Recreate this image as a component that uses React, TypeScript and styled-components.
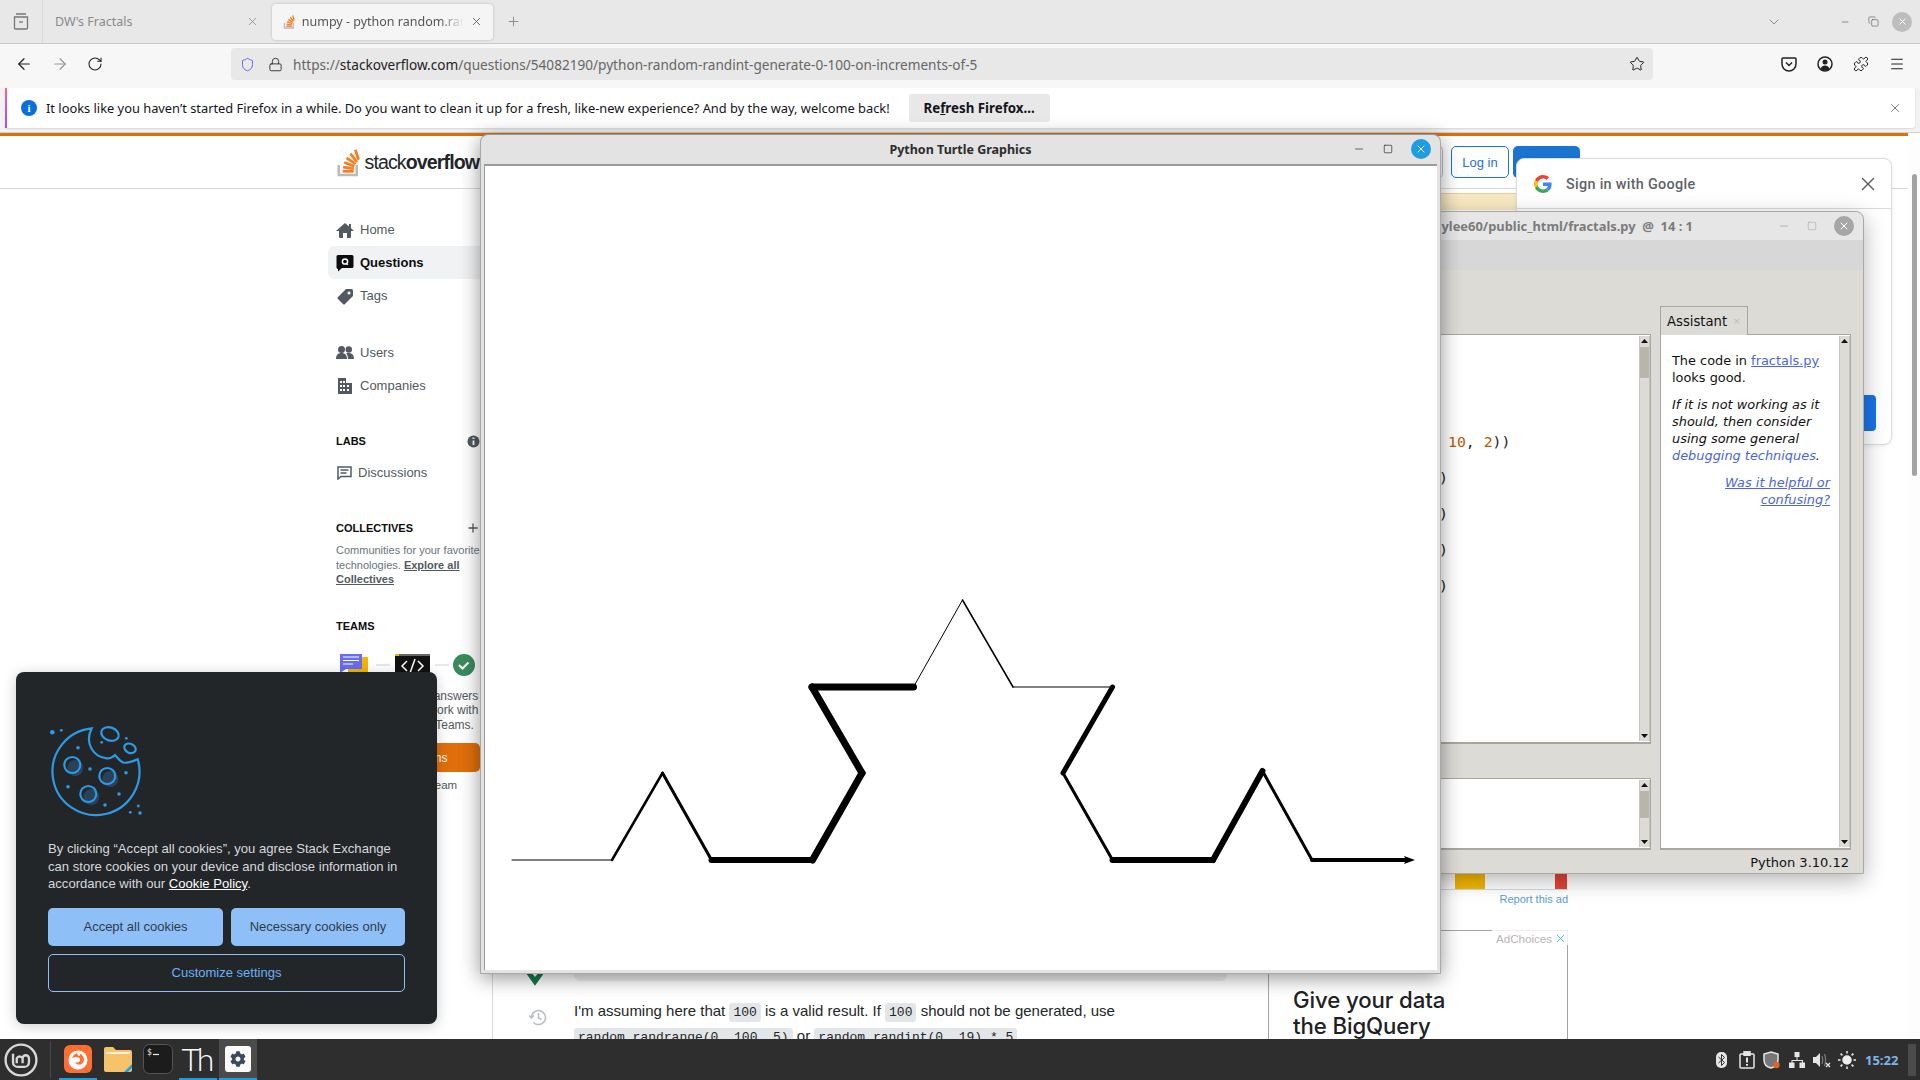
import React from "react";
import styled, { createGlobalStyle } from "styled-components";
import { ArrowLeft, ArrowRight, RotateCw, Lock, Star, Shield, Plus, X, ChevronDown, Menu, Puzzle, Minus, Square, Copy } from "lucide-react";
import { FaCog } from "react-icons/fa";

const Global = createGlobalStyle`
  html, body { margin: 0; padding: 0; overflow: hidden; background: #fff; }
  * { box-sizing: border-box; }
`;

const Desktop = styled.div`
  position: relative; width: 1920px; height: 1080px; overflow: hidden;
  display: flex; flex-direction: column; font-family: "Liberation Sans", Arial, sans-serif;
`;

/* ---------- Firefox chrome ---------- */
const TabBar = styled.div`
  height: 44px; flex: none; display: flex; align-items: center; background: #e8e8e8;
  border-bottom: 1px solid #c9c9c9; font-family: "Noto Sans", sans-serif; font-size: 12.5px; color: #555;
`;
const SideToggle = styled.div`
  width: 43px; height: 43px; display: flex; align-items: center; justify-content: center;
  border-right: 1px solid #dadada; color: #777;
`;
const InactiveTab = styled.div`
  width: 222px; padding: 0 6px 0 12px; display: flex; align-items: center; justify-content: space-between; color: #8a8a8a; margin-right: 7px;
`;
const ActiveTab = styled.div`
  width: 221px; height: 36px; padding: 0 10px 0 11px; display: flex; align-items: center; gap: 6px;
  background: #f5f5f5; border-radius: 4px; box-shadow: 0 0 3px rgba(0,0,0,.2); color: #555;
`;
const TabLabel = styled.span`
  flex: 1; overflow: hidden; white-space: nowrap;
  -webkit-mask-image: linear-gradient(90deg, #000 85%, transparent);
  mask-image: linear-gradient(90deg, #000 85%, transparent);
`;
const NewTab = styled.div`
  margin-left: 13px; color: #888; display: flex;
`;
const TabSpacer = styled.div`flex: 1;`;
const WinButtons = styled.div`
  display: flex; align-items: center; gap: 13px; padding-right: 8px; color: #555;
`;
const WinMin = styled(Minus)`margin-right: 5px;`;
const Chevron = styled.div`margin-right: 58px; display: flex; color: #777;`;
const RoundClose = styled.div<{ $bg: string }>`
  width: 20px; height: 20px; border-radius: 50%; background: ${p => p.$bg}; color: #fff;
  display: flex; align-items: center; justify-content: center;
`;
const Toolbar = styled.div`
  height: 44px; flex: none; display: flex; align-items: center; background: #f7f7f7;
  padding: 0 15px 4px 15px; color: #222;
`;
const NavIcon = styled.div<{ $dim?: boolean }>`
  width: 36px; display: flex; color: ${p => (p.$dim ? "#999" : "#222")};
`;
const UrlBar = styled.div`
  margin-left: 108px; width: 1422px; height: 32px; background: #e8e8e8; border-radius: 4px;
  display: flex; align-items: center; padding: 0 8px 0 9px; color: #666;
  font-family: "Noto Sans", sans-serif; font-size: 13.6px;
`;
const LockIcon = styled(Lock)`margin-left: 13px;`;
const UrlHost = styled.span`color: #222;`;
const UrlText = styled.span`flex: 1; margin-left: 10px; white-space: nowrap;`;
const ToolIcons = styled.div`
  margin-left: auto; display: flex; gap: 20px; align-items: center; color: #222;
`;
const NoticeStrip = styled.div`
  height: 44px; flex: none; background: #f2f2f2; padding: 0 5px 4px 5px; 
`;
const NoticeBar = styled.div`
  height: 40px; background: #fff; display: flex; align-items: center; padding-left: 14px; border-radius: 3px;
  border-left: 2px solid; border-image: linear-gradient(#ff5f8f, #a34bff) 1; box-shadow: 0 1px 2px rgba(0,0,0,.12);
  font-family: "Noto Sans", sans-serif; font-size: 12.85px; color: #15141a; white-space: nowrap;
`;
const InfoDot = styled.div`
  width: 16px; height: 16px; border-radius: 50%; background: #0b6ee0; color: #fff; font: bold 11px "Liberation Serif", serif;
  display: flex; align-items: center; justify-content: center; margin-right: 9px; flex: none;
`;
const RefreshBtn = styled.div`
  margin-left: 19px; width: 141px; height: 28px; background: #e8e8e8; border-radius: 3px; display: flex;
  align-items: center; justify-content: center; font-weight: 700; font-size: 13.3px;
`;
const NoticeClose = styled.div`margin-left: auto; margin-right: 13px; display: flex; color: #555;`;

/* ---------- Stack Overflow page ---------- */
const PageWrap = styled.div`
  flex: 1; min-height: 0; display: flex; background: #fff; border-top: 1px solid #d0d0d0;
`;
const Page = styled.div`
  width: 1908px; display: flex; flex-direction: column; border-top: 3px solid #e06f0b; overflow: hidden;
`;
const PageScroll = styled.div`
  width: 12px; padding: 41px 3px 0 4px; background: #fdfdfd; border-top: 0;
`;
const PageThumb = styled.div`height: 302px; background: #a3a3a3; border-radius: 3px;`;
const SoHeader = styled.div`
  height: 53px; flex: none; border-bottom: 1px solid #d6d9dc; display: flex; align-items: center; padding: 0 328px 0 336px; gap: 4px;
`;
const Logo = styled.div`
  display: flex; align-items: center; width: 144px; gap: 3px; font-size: 19.6px; letter-spacing: -0.9px; color: #232629; white-space: nowrap;
`;
const LogoBold = styled.b`font-weight: 700;`;
const SearchBox = styled.div`
  flex: 1; height: 32px; margin: 0 4px 0 20px; border: 1px solid #babfc4; border-radius: 4px;
`;
const LoginBtn = styled.div`
  width: 58px; height: 32px; border: 1px solid #1b75d0; border-radius: 5px; color: #1b75d0; font-size: 13px;
  display: flex; align-items: center; justify-content: center; background: #fff;
`;
const SignupBtn = styled.div`
  width: 67px; height: 32px; background: #1b75d0; border-radius: 5px; color: #fff; font-size: 13px;
  display: flex; align-items: center; justify-content: center;
`;
const Content = styled.div`flex: 1; min-height: 0; display: flex; padding-left: 328px; padding-right: 340px;`;
const Sidebar = styled.nav`
  width: 164px; flex: none; padding-top: 24px; font-size: 13px; color: #525960;
`;
const NavRow = styled.div<{ $active?: boolean }>`
  height: 33px; display: flex; align-items: center; gap: 6px; padding-left: 8px; border-radius: 6px 0 0 6px;
  background: ${p => (p.$active ? "#f1f2f3" : "transparent")};
  color: ${p => (p.$active ? "#0c0d0e" : "#525960")}; font-weight: ${p => (p.$active ? 700 : 400)};
`;
const NavGap = styled.div`height: 24px;`;
const SectionHead = styled.div<{ $top: number }>`
  height: 16px; margin-top: ${p => p.$top}px; padding: 0 0 0 8px; width: 152px; display: flex; align-items: center; justify-content: space-between;
  font-size: 11px; font-weight: 700; color: #0c0d0e;
`;
const DiscussRow = styled(NavRow)`margin-top: 7px; padding-left: 9px; gap: 6px;`;
const Desc = styled.p`
  margin: 7px 0 0; padding-left: 8px; font-size: 11px; line-height: 14.5px; color: #6a737c; white-space: nowrap;
`;
const DescLink = styled.a`font-weight: 700; color: #525960; text-decoration: underline;`;
const TeamsArt = styled.div`
  margin: 20px 0 0 12px; height: 24px; display: flex;
`;
const TeamsText = styled.p`
  margin: 11px 0 0; width: 152px; font-size: 12px; line-height: 14.5px; color: #525960; text-align: center; white-space: nowrap;
`;
const OrangeBtn = styled.div`
  margin-top: 11px; margin-left: 8px; width: 144px; height: 29px; background: #e06f0b; border-radius: 5px; color: #fff; font-size: 12px;
  display: flex; align-items: center; justify-content: center;
`;
const TeamLink = styled.div`
  margin-top: 7px; margin-left: 8px; width: 144px; text-align: center; font-size: 11.5px; color: #525960;
`;
const MainArea = styled.div`flex: 1; display: flex; flex-direction: column; min-width: 0;`;
const Banner = styled.div`
  height: 17px; margin-top: 4px; flex: none; background: #f9e9c2; border-top: 1px solid #e6cf9a;
`;
const MainRow = styled.div`flex: 1; display: flex; min-height: 0;`;
const Post = styled.div`
  flex: 1; min-width: 0; border-left: 1px solid #d6d9dc; padding-top: 671px; display: grid; grid-template-columns: 81px 1fr; grid-template-rows: 100px auto; padding-right: 41px;
`;
const VoteCell = styled.div`display: flex; align-items: flex-end; justify-content: center; padding-left: 2px;`;
const VoteCheck = styled.svg`margin-bottom: -5px;`;
const CommentStrip = styled.div`background: #eceef0; border-radius: 0 0 6px 6px;`;
const HistoryCell = styled.div`display: flex; justify-content: center; padding: 27px 0 0 8px; color: #babfc4;`;
const PostText = styled.div`
  margin-top: 19px; font-size: 15px; line-height: 22.5px; color: #232629; white-space: nowrap;
`;
const Code = styled.code`
  font-family: "Liberation Mono", monospace; font-size: 13px; background: #e3e6e8; padding: 2px 4px; border-radius: 3px;
`;
const Aside = styled.aside`width: 300px; flex: none; padding-top: 663px; position: relative;`;
const AdStrip = styled.div`
  height: 17px; display: flex; border-bottom: 1px solid #d6d9dc;
`;
const AdBlock = styled.div<{ $c: string; $w: number; $m: number }>`
  width: ${p => p.$w}px; margin-left: ${p => p.$m}px; background: ${p => p.$c};
`;
const ReportAd = styled.div`
  height: 40px; text-align: right; font-size: 11px; line-height: 19px; color: #5a9ae8;
`;
const AdBox = styled.div`
  height: 120px; border: 1px solid #a5a5a5; border-bottom: 0; padding: 56px 0 0 24px; position: relative;
  font: 500 22.2px/26px "Inter", sans-serif; color: #202124; letter-spacing: -0.1px;
`;
const AdChoices = styled.div`
  position: absolute; top: -1px; right: -1px; height: 15px; width: 76px; background: #fff; display: flex; align-items: center; gap: 2px;
  padding-left: 4px; font: 400 11.6px "Liberation Sans", sans-serif; color: #b5b5b5; letter-spacing: 0; border: 1px solid #eee; border-left: 0; border-bottom: 0;
`;

/* ---------- Overlays on the page ---------- */
const CookiePanel = styled.div`
  position: absolute; left: 16px; top: 672px; width: 421px; height: 352px; background: #232629; border-radius: 8px;
  padding: 52px 32px 0; box-shadow: 0 2px 14px rgba(0,0,0,.2); z-index: 3;
`;
const CookieText = styled.p`
  margin: 20px 0 0; font-size: 13.1px; line-height: 17.5px; color: #d6d9dc;
`;
const CookieLink = styled.a`color: #fff; text-decoration: underline;`;
const CookieBtns = styled.div`
  margin-top: 15px; display: grid; grid-template-columns: 175px 174px; gap: 8px;
`;
const CookieBtn = styled.div<{ $outline?: boolean }>`
  height: 38px; border-radius: 5px; font-size: 13px; display: flex; align-items: center; justify-content: center;
  background: ${p => (p.$outline ? "transparent" : "#8ec0f7")};
  color: ${p => (p.$outline ? "#6cb0f5" : "#2f3b4a")};
  border: ${p => (p.$outline ? "1px solid #8ec0f7" : "0")};
  grid-column: ${p => (p.$outline ? "1 / 3" : "auto")};
`;
const GoogleCard = styled.div`
  position: absolute; left: 1516px; top: 158px; width: 376px; height: 287px; background: #fff; border: 1px solid #dadce0;
  border-radius: 8px; z-index: 4; box-shadow: 0 1px 4px rgba(0,0,0,.08);
`;
const GoogleHead = styled.div`
  height: 50px; padding-top: 1px; border-bottom: 1px solid #dadce0; display: flex; align-items: center; padding-right: 12px; padding-left: 17px;
  font: 500 14.4px "Roboto", sans-serif; color: #5f6368; letter-spacing: .3px; gap: 14px;
`;
const GoogleClose = styled.div`margin-left: auto; display: flex; color: #5f6368;`;
const GoogleBlue = styled.div`
  position: absolute; right: 15px; top: 236px; width: 40px; height: 36px; border-radius: 4px; background: #1a73e8;
`;

/* ---------- Windows ---------- */
const ThonnyWin = styled.div`
  position: absolute; left: 1162px; top: 211px; width: 702px; height: 663px; z-index: 5; display: flex; flex-direction: column;
  border: 1px solid #aaa9a4; border-radius: 8px 8px 0 0; background: #dcdbd6; box-shadow: 0 6px 22px rgba(0,0,0,.3);
  font-family: "DejaVu Sans", sans-serif;
`;
const ThonnyTitle = styled.div`
  height: 28px; flex: none; background: #e6e6e6; border-radius: 8px 8px 0 0; display: flex; align-items: center; justify-content: flex-end;
  padding-right: 170px; position: relative; font: 700 12.9px "Noto Sans", sans-serif; color: #7b7b7b; white-space: pre;
`;
const ThonnyBtns = styled.div`
  position: absolute; right: 9px; top: 4px; display: flex; align-items: center; gap: 17px; color: #999;
`;
const ThonnyMenu = styled.div`height: 30px; flex: none; background: #d7d7d7;`;
const ThonnyBody = styled.div`
  flex: 1; min-height: 0; display: grid; grid-template-columns: 1fr 191px; column-gap: 9px; padding-right: 12px;
`;
const ThonnyLeft = styled.div`padding-top: 64px; display: flex; flex-direction: column;`;
const ThonnyRight = styled.div`padding-top: 36px; display: flex; flex-direction: column;`;
const Pane = styled.div<{ $h?: number; $mt?: number }>`
  height: ${p => (p.$h ? `${p.$h}px` : "auto")}; margin-top: ${p => p.$mt ?? 0}px; flex: ${p => (p.$h ? "none" : 1)};
  min-height: 0; background: #fff; border: 1px solid #a8a79f; border-bottom-width: 2px; display: flex;
`;
const EditorText = styled.div`
  flex: 1; padding: 89px 0 0 284px; font: 14.8px/36px "DejaVu Sans Mono", monospace; color: #222; white-space: pre;
`;
const EditorLine = styled.div<{ $paren?: boolean }>`
  margin-left: ${p => (p.$paren ? -9 : 0)}px;
`;
const Num = styled.span`color: #b85a00;`;
const AssistantBody = styled.div`
  flex: 1; padding: 17px 9px 0 11px; font-size: 12.9px; line-height: 17px; color: #111;
`;
const AsstP = styled.p<{ $right?: boolean; $italic?: boolean }>`
  margin: 0 0 10px; text-align: ${p => (p.$right ? "right" : "left")}; font-style: ${p => (p.$italic ? "italic" : "normal")};
`;
const AsstLink = styled.a`color: #4a66e0; text-decoration: underline;`;
const AsstPlain = styled.span`color: #4a66e0;`;
const Tab = styled.div`
  width: 88px; height: 29px; margin-bottom: -1px; position: relative; z-index: 1; border: 1px solid #a8a79f; border-bottom: 0; background: #dcdbd6; display: flex; align-items: center; padding-left: 6px;
  font-size: 13.2px; color: #111; gap: 6px;
`;
const TabX = styled.span`font-size: 9px; color: #bbb;`;
const Scroll = styled.div`
  width: 11px; flex: none; display: flex; flex-direction: column; margin: 1px 0; background: #dcdbd6; border: 1px solid #c8c7c0; border-width: 0 1px;
`;
const ScrollBtn = styled.div`
  height: 10px; flex: none; display: flex; align-items: center; justify-content: center; background: #dcdbd6; font-size: 0;
`;
const ScrollTrack = styled.div`flex: 1; min-height: 0; padding: 1px 0;`;
const ScrollThumb = styled.div<{ $h: number }>`height: ${p => p.$h}px; background: #b8b5ab;`;
const Status = styled.div`
  grid-column: 1 / 3; height: 24px; text-align: right; padding-right: 2px; font-size: 13px; line-height: 25px; color: #111;
`;
const TurtleWin = styled.div`
  position: absolute; left: 480px; top: 134px; width: 961px; height: 840px; z-index: 6; display: flex; flex-direction: column;
  background: #e3e3e3; border: 1px solid #a9a9a9; border-top-color: #999; border-radius: 8px 8px 0 0; box-shadow: 0 4px 20px rgba(0,0,0,.42);
`;
const TurtleTitle = styled.div`
  height: 29px; flex: none; display: flex; align-items: center; justify-content: center; position: relative;
  font: 700 12.5px "Noto Sans", sans-serif; color: #2c2c2c;
`;
const TurtleBtns = styled.div`
  position: absolute; right: 9px; top: 4px; display: flex; align-items: center; gap: 18px; color: #222;
`;
const TurtleCanvas = styled.div`
  flex: 1; min-height: 0; margin: 0 3px 3px 3px; background: #fff; border-top: 2px solid #9a9a9a; border-left: 1px solid #9a9a9a;
`;
const TurtleSvg = styled.svg`display: block;`;

/* ---------- Taskbar ---------- */
const Taskbar = styled.div`
  height: 41px; flex: none; position: relative; z-index: 8; background: #2e2e2e; display: flex; align-items: center;
`;
const MintBtn = styled.div`width: 50px; display: flex; justify-content: center; padding-right: 8px;`;
const TaskSep = styled.div`width: 1px; height: 37px; background: #484848; margin-right: 8px;`;
const Launcher = styled.div`display: flex; gap: 2px;`;
const LaunchItem = styled.div<{ $open?: boolean; $focus?: boolean }>`
  width: 38px; height: 41px; display: flex; align-items: center; justify-content: center;
  background: ${p => (p.$focus ? "#4b4b4b" : "transparent")};
  border-bottom: 2px solid ${p => (p.$open ? "#1f9ede" : "transparent")};
`;
const SettingsIcon = styled.div`
  width: 26px; height: 26px; border-radius: 3px; background: #fafafa; color: #3d4a5c; display: flex; align-items: center; justify-content: center;
`;
const Tray = styled.div`margin-left: auto; display: flex; align-items: center; padding-right: 4px;`;
const TrayIcon = styled.div`width: 25px; display: flex; justify-content: center; color: #e6e6e6;`;
const Clock = styled.div`
  margin-left: 6px; font: 700 13px "Noto Sans", sans-serif; color: #7fb5e6; width: 34px;
`;
const ShowDesktop = styled.div`margin-left: 9px; width: 8px; height: 32px; background: #4b4b4b;`;

/* ---------- Drawings ---------- */
const SoMark = ({ s = 26 }: { s?: number }) => (
  <svg width={s * 0.85} height={s} viewBox="0 0 24 30">
    <path d="M2 18v10h18V18" fill="none" stroke="#bcbbbb" strokeWidth="2.6" />
    <g stroke="#f48024" strokeWidth="2.8" fill="none">
      <path d="M6 24.3h11" />
      <path d="M6.3 20.2l10.8 1.5" />
      <path d="M7.4 15.5l10.2 3.6" />
      <path d="M9.8 10.8l9 6" />
      <path d="M13.6 6.6l6.6 8.4" />
      <path d="M18.6 2.8l3.2 10" />
    </g>
  </svg>
);
const I = styled.svg`flex: none;`;
const HomeIcon = () => (
  <I width="18" height="18" viewBox="0 0 18 18" fill="#525960"><path d="M15 10v6a1 1 0 0 1-1 1h-3v-5H7v5H4a1 1 0 0 1-1-1v-6H0l9-8 4 3.5V3h2v4.3l3 2.7h-3z" /></I>
);
const QIcon = () => (
  <I width="18" height="18" viewBox="0 0 18 18"><path fill="#0c0d0e" d="M2 1h14a1.5 1.5 0 0 1 1.5 1.500v10a1.500 1.500 0 0 1-1.500 1.500H6l-4 3.500V14.900A1.500 1.500 0 0 1 .5 13.500v-11A1.500 1.500 0 0 1 2 1z" /><circle cx="9" cy="7.500" r="2.600" fill="none" stroke="#fff" strokeWidth="1.500" /><path d="M10 9l1.800 1.800" stroke="#fff" strokeWidth="1.400" /></I>
);
const TagIcon = () => (
  <I width="18" height="18" viewBox="0 0 18 18" fill="#525960"><path d="M10 2h5.500A1.500 1.500 0 0 1 17 3.500V9l-8 8a1.400 1.400 0 0 1-2 0l-5-5a1.400 1.400 0 0 1 0-2l8-8zm3 2.500a1.500 1.500 0 1 0 0 3 1.500 1.500 0 0 0 0-3z" /></I>
);
const UsersIcon = () => (
  <I width="18" height="18" viewBox="0 0 18 18" fill="#525960"><circle cx="5.500" cy="5.500" r="3.500" /><circle cx="12.800" cy="5.500" r="3.200" /><path d="M0 15c0-4 2-6 5.500-6S11 11 11 15H0z" /><path d="M12 15c0-2.500-.6-4.400-1.800-5.800.8-.2 1.700-.2 2.600-.2 3.200 0 5.200 2 5.200 6h-6z" /></I>
);
const BuildingIcon = () => (
  <I width="18" height="18" viewBox="0 0 18 18" fill="#525960" fillRule="evenodd"><path d="M2 1h8v5h6v11H2V1zm2 3v2h2V4H4zm3 0v2h2V4H7zM4 8v2h2V8H4zm3 0v2h2V8H7zm4 0v2h2V8h-2zm-7 4v2h2v-2H4zm3 0v2h2v-2H7zm4 0v2h2v-2h-2z" /></I>
);
const DiscussIcon = () => (
  <I width="15" height="15" viewBox="0 0 15 15" fill="none" stroke="#525960" strokeWidth="1.500"><path d="M1 2h13v9.500H4L1 14V2z" /><path d="M3.500 5h8M3.500 8h6" /></I>
);
const InfoIcon = () => (
  <I width="13" height="13" viewBox="0 0 13 13"><circle cx="6.500" cy="6.500" r="6" fill="#525960" /><path d="M6.500 5.500v4.500M6.500 2.500v1.600" stroke="#fff" strokeWidth="1.800" /></I>
);
const TeamsArtSvg = () => (
  <svg width="150" height="24" viewBox="0 0 150 24">
    <rect x="8" y="3" width="20" height="22" fill="#f5b400" />
    <path d="M0 0h22v15H6l-6 4V0z" fill="#6a6cf0" />
    <path d="M3 3h16M3 6.500h16M3 10h10" stroke="#fff" strokeWidth="1" />
    <path d="M36 11h14" stroke="#dfe1e3" strokeWidth="1.500" />
    <rect x="55" y="0" width="35" height="24" fill="#111" />
    <rect x="55" y="0" width="4" height="2" fill="#f5b400" />
    <rect x="59" y="0" width="31" height="2" fill="#666" />
    <path d="M67 7l-5 5 5 5M78 7l5 5-5 5M75 5l-5 14" stroke="#fff" strokeWidth="1.500" fill="none" />
    <path d="M95 11h14" stroke="#dfe1e3" strokeWidth="1.500" />
    <circle cx="124" cy="11" r="11" fill="#3a8b5c" />
    <path d="M119 11l3.500 3.500 6-6" stroke="#fff" strokeWidth="2" fill="none" />
  </svg>
);
const CookieSvg = styled.svg`display: block;`;
const CookieIcon = () => {
  const dots: [number, number, number][] = [[4.3, 8.3, 2.3], [13.3, 6.300, 1.400], [30, 23.700, 1.800], [53.700, 18.300, 1.400], [78.300, 14.300, 1.400], [42, 45, 1.800], [78, 48.700, 1.800], [20, 62.700, 1.800], [71, 70, 1.800], [57, 81, 1.800], [90.300, 82, 1.400], [82.300, 88.300, 1.400], [92, 89, 1.800]];
  const chips: [number, number][] = [[24.300, 41], [59.300, 52], [40.300, 70]];
  return (
    <CookieSvg width="96" height="96" viewBox="0 0 96 96">
      {chips.map(([x, y]) => <circle key={x} cx={x + 3} cy={y + 3} r="8" fill="#2a4158" />)}
      <g fill="none" stroke="#2d9ae6" strokeWidth="2.200">
        <path d="M43.700 4.300A43.500 43.500 0 1 0 89.700 35.300C84 38 76 40 73.700 37.700 71 36 69 33 67 31 64 34 61 34.500 58.700 34.300 46 33 36 20 43.700 4.300z" />
        <ellipse cx="62" cy="10" rx="9" ry="6.500" transform="rotate(20 62 10)" />
        <ellipse cx="82" cy="24.300" rx="6" ry="4.500" transform="rotate(25 82 24.300)" />
        {chips.map(([x, y]) => <circle key={x} cx={x} cy={y} r="8" />)}
      </g>
      {dots.map(([x, y, r]) => <circle key={`${x}-${y}`} cx={x} cy={y} r={r} fill="#2d9ae6" />)}
    </CookieSvg>
  );
};
const GoogleG = () => (
  <I width="18" height="18" viewBox="0 0 48 48">
    <path fill="#EA4335" d="M24 9.500c3.540 0 6.710 1.220 9.210 3.600l6.850-6.850C35.900 2.380 30.470 0 24 0 14.620 0 6.510 5.380 2.560 13.220l7.980 6.190C12.430 13.720 17.740 9.500 24 9.500z" />
    <path fill="#4285F4" d="M46.980 24.550c0-1.570-.15-3.090-.38-4.550H24v9.020h12.940c-.58 2.960-2.260 5.480-4.780 7.180l7.730 6c4.510-4.180 7.090-10.360 7.090-17.650z" />
    <path fill="#FBBC05" d="M10.530 28.590c-.48-1.450-.76-2.990-.76-4.590s.27-3.140.76-4.590l-7.980-6.190C.92 16.460 0 20.120 0 24c0 3.880.92 7.540 2.560 10.780l7.970-6.190z" />
    <path fill="#34A853" d="M24 48c6.480 0 11.930-2.130 15.890-5.810l-7.730-6c-2.150 1.450-4.920 2.300-8.160 2.300-6.260 0-11.570-4.220-13.470-9.910l-7.980 6.190C6.510 42.620 14.620 48 24 48z" />
  </I>
);
const ScrollBar = ({ thumb }: { thumb?: number }) => (
  <Scroll>
    <ScrollBtn><svg width="7" height="4"><path d="M3.500 0L7 4H0z" fill="#111" /></svg></ScrollBtn>
    <ScrollTrack>{thumb ? <ScrollThumb $h={thumb} /> : null}</ScrollTrack>
    <ScrollBtn><svg width="7" height="4"><path d="M0 0h7L3.500 4z" fill="#111" /></svg></ScrollBtn>
  </Scroll>
);
const segs: [number, number, number, number, number][] = [
  [512, 860, 612, 860, 1], [612, 860, 662.500, 773, 2.500], [662.500, 773, 711.500, 860, 3], [711.500, 860, 812.500, 860, 6],
  [812.500, 860, 862, 773, 7], [862, 773, 812, 687, 7], [812, 687, 913.500, 687, 7], [913.500, 687, 962.500, 600, 1],
  [962.500, 600, 1013, 687, 1.500], [1013, 687, 1112.500, 687, 1], [1112.500, 687, 1063, 773, 5], [1063, 773, 1112.500, 860, 3],
  [1112.500, 860, 1213, 860, 6], [1213, 860, 1262.500, 771, 6], [1262.500, 771, 1312, 860, 3], [1312, 860, 1405, 860, 4],
];
const MintLogo = () => (
  <svg width="34" height="34" viewBox="0 0 32 32" fill="none" stroke="#d8d8d8" strokeWidth="2.200">
    <circle cx="16" cy="16" r="14.500" />
    <path d="M8.500 10v8a4.500 4.500 0 0 0 4.500 4.500h6a4.500 4.500 0 0 0 4.500-4.500v-3.500a3 3 0 0 0-6 0V19M17.500 14.500a3 3 0 0 0-5.500 0V19" />
  </svg>
);
const FirefoxIcon = () => (
  <svg width="28" height="28" viewBox="0 0 28 28">
    <rect width="28" height="28" rx="6" fill="#ff6f32" />
    <circle cx="14" cy="15" r="9.500" fill="#fff" />
    <path d="M8 13c2-1 5-1.500 6.500-.5 1.500 1 2 2.500 1 4-1 1.300-3 1.300-4.500.5 1 2.300 4 3.300 6.500 2 2.500-1.300 3.200-4.300 2-6.800-.8-1.700-2-2.800-3.500-3.400.3 1 0 1.800-.8 2.200-1-.7-2-1.500-2.200-3C10.500 9 8.800 10.800 8 13z" fill="#ff6f32" />
  </svg>
);
const FolderIcon = () => (
  <svg width="28" height="26" viewBox="0 0 28 26">
    <path d="M0 3a2 2 0 0 1 2-2h7l3 3h14a2 2 0 0 1 2 2v18a2 2 0 0 1-2 2H2a2 2 0 0 1-2-2V3z" fill="#f6c36b" />
    <path d="M2 7h24" stroke="#fdf0d5" strokeWidth="2" />
    <path d="M20 26l8-8v4l-4 4z" fill="#2a9fd8" />
  </svg>
);
const TerminalIcon = () => (
  <svg width="30" height="30" viewBox="0 0 30 30">
    <rect x=".5" y=".5" width="29" height="29" rx="6" fill="#1c1c1c" stroke="#555" />
    <text x="4" y="11" fontFamily="DejaVu Sans Mono" fontSize="8" fill="#eee">$</text>
    <path d="M10 10.500h6" stroke="#eee" strokeWidth="1.200" />
  </svg>
);
const ThonnyIcon = styled.div`
  font: 300 32px/30px "Lato", sans-serif; color: #fff; letter-spacing: -3px; padding-right: 3px;
`;
const Pocket = () => (
  <svg width="16" height="16" viewBox="0 0 16 16" fill="none" stroke="#222" strokeWidth="1.500"><path d="M2 2h12a1 1 0 0 1 1 1v5a7 7 0 0 1-14 0V3a1 1 0 0 1 1-1z" /><path d="M5 6.500l3 3 3-3" /></svg>
);
const Account = () => (
  <svg width="16" height="16" viewBox="0 0 16 16"><circle cx="8" cy="8" r="7" fill="none" stroke="#222" strokeWidth="1.500" /><circle cx="8" cy="6" r="2.500" fill="#222" /><path d="M3.500 12.500c1-2 2.500-3 4.500-3s3.500 1 4.500 3a6 6 0 0 1-9 0z" fill="#222" /></svg>
);
const Sun = () => (
  <svg width="18" height="18" viewBox="0 0 18 18" stroke="#eee" strokeWidth="1.500"><circle cx="9" cy="9" r="4" fill="#eee" /><path d="M9 0v2.500M9 15.500V18M0 9h2.500M15.500 9H18M2.600 2.600l1.800 1.800M13.600 13.600l1.800 1.800M2.600 15.400l1.800-1.800M13.600 4.400l1.800-1.800" /></svg>
);
const TrayShield = () => (
  <svg width="18" height="18" viewBox="0 0 18 18"><path d="M8 1l7 2v6c0 4-3 7-7 8-4-1-7-4-7-8V3l7-2z" fill="#777" stroke="#e6e6e6" strokeWidth="1.500" /><circle cx="13.500" cy="14" r="3.200" fill="#e2632a" /></svg>
);
const TrayClip = () => (
  <svg width="16" height="18" viewBox="0 0 16 18" fill="none" stroke="#e6e6e6" strokeWidth="1.500"><rect x="1" y="3" width="14" height="14" rx="1" /><rect x="5" y=".8" width="6" height="3.500" fill="#e6e6e6" /><path d="M8 6.500v5M8 13v1.800" strokeWidth="2" /></svg>
);
const TrayNet = () => (
  <svg width="16" height="16" viewBox="0 0 16 16" fill="#e6e6e6"><rect x="5.500" y="0" width="5" height="5" /><rect x="0" y="10.500" width="5.500" height="5.500" /><rect x="10.500" y="10.500" width="5.500" height="5.500" /><path d="M7.500 5h1v3h5.500v3h-1V9H3.500v2h-1V8h5z" /></svg>
);
const TrayVol = () => (
  <svg width="18" height="16" viewBox="0 0 18 16" fill="none"><path d="M0 5h3l4-4v14l-4-4H0z" fill="#e6e6e6" /><path d="M9 4c1 2.500 1 5.500 0 8M11.500 2c1.500 4 1.500 8 0 12" stroke="#777" strokeWidth="1.300" /><path d="M13 11l4 4M17 11l-4 4" stroke="#e6e6e6" strokeWidth="1.300" /></svg>
);
const TrayBt = () => (
  <svg width="11" height="16" viewBox="0 0 11 16"><rect width="11" height="16" rx="5" fill="#e6e6e6" /><path d="M2.500 5l6 5.500-3 3v-11l3 3-6 5.500" fill="none" stroke="#333" strokeWidth="1" /></svg>
);

export default function App() {
  return (
    <Desktop>
      <Global />
      <TabBar>
        <SideToggle>
          <svg width="16" height="17" viewBox="0 0 16 17" fill="none" stroke="#777" strokeWidth="1.300"><path d="M3 1h10M1.500 4h13v11a1 1 0 0 1-1 1h-11a1 1 0 0 1-1-1V4z" /><path d="M6 9h4" /></svg>
        </SideToggle>
        <InactiveTab>DW's Fractals<X size={13} strokeWidth={1.5} /></InactiveTab>
        <ActiveTab>
          <SoMark s={15} />
          <TabLabel>numpy - python random.randint</TabLabel>
          <X size={13} strokeWidth={1.5} />
        </ActiveTab>
        <NewTab><Plus size={15} strokeWidth={1.5} /></NewTab>
        <TabSpacer />
        <Chevron><ChevronDown size={16} strokeWidth={1.2} /></Chevron>
        <WinButtons>
          <WinMin size={10} strokeWidth={1.5} />
          <Copy size={11} strokeWidth={1.3} />
          <RoundClose $bg="#bdbdbd"><X size={11} strokeWidth={2} /></RoundClose>
        </WinButtons>
      </TabBar>
      <Toolbar>
        <NavIcon><ArrowLeft size={18} strokeWidth={1.6} /></NavIcon>
        <NavIcon $dim><ArrowRight size={18} strokeWidth={1.6} /></NavIcon>
        <NavIcon><RotateCw size={16} strokeWidth={1.6} /></NavIcon>
        <UrlBar>
          <Shield size={15} strokeWidth={1.5} color="#5a6be8" />
          <LockIcon size={15} strokeWidth={1.5} color="#333" />
          <UrlText>https://<UrlHost>stackoverflow.com</UrlHost>/questions/54082190/python-random-randint-generate-0-100-on-increments-of-5</UrlText>
          <Star size={16} strokeWidth={1.5} color="#222" />
        </UrlBar>
        <ToolIcons>
          <Pocket />
          <Account />
          <Puzzle size={16} strokeWidth={1.5} />
          <Menu size={16} strokeWidth={1.6} />
        </ToolIcons>
      </Toolbar>
      <NoticeStrip>
        <NoticeBar>
          <InfoDot>i</InfoDot>
          It looks like you haven’t started Firefox in a while. Do you want to clean it up for a fresh, like-new experience? And by the way, welcome back!
          <RefreshBtn><span>Re<u>f</u>resh Firefox...</span></RefreshBtn>
          <NoticeClose><X size={14} strokeWidth={1.3} /></NoticeClose>
        </NoticeBar>
      </NoticeStrip>

      <PageWrap>
        <Page>
          <SoHeader>
            <Logo>
              <SoMark s={30} />
              <span>stack<LogoBold>overflow</LogoBold></span>
            </Logo>
            <SearchBox />
            <LoginBtn>Log in</LoginBtn>
            <SignupBtn>Sign up</SignupBtn>
          </SoHeader>
          <Content>
            <Sidebar>
              <NavRow><HomeIcon />Home</NavRow>
              <NavRow $active><QIcon />Questions</NavRow>
              <NavRow><TagIcon />Tags</NavRow>
              <NavGap />
              <NavRow><UsersIcon />Users</NavRow>
              <NavRow><BuildingIcon />Companies</NavRow>
              <SectionHead $top={31}>LABS<InfoIcon /></SectionHead>
              <DiscussRow><DiscussIcon />Discussions</DiscussRow>
              <SectionHead $top={31}>COLLECTIVES<Plus size={14} strokeWidth={2.2} color="#525960" /></SectionHead>
              <Desc>Communities for your favorite<br />technologies. <DescLink>Explore all</DescLink><br /><DescLink>Collectives</DescLink></Desc>
              <SectionHead $top={31}>TEAMS</SectionHead>
              <TeamsArt><TeamsArtSvg /></TeamsArt>
              <TeamsText>Ask questions, find answers<br />and collaborate at work with<br />Stack Overflow for Teams.</TeamsText>
              <OrangeBtn>Explore Teams</OrangeBtn>
              <TeamLink>Create a free Team</TeamLink>
            </Sidebar>
            <MainArea>
              <Banner />
              <MainRow>
                <Post>
                  <VoteCell>
                    <VoteCheck width="22" height="16" viewBox="0 0 20 14"><path d="M0 0h5l5 6 5-6h5L10 14z" fill="#16794a" /></VoteCheck>
                  </VoteCell>
                  <CommentStrip />
                  <HistoryCell>
                    <svg width="19" height="19" viewBox="0 0 19 19" fill="none" stroke="#babfc4" strokeWidth="1.600"><path d="M3.500 9.500a7 7 0 1 1 2 5" /><path d="M1 7.500l2.500 2.500L6 7.500" /><path d="M10.500 5v5l3 1.500" /></svg>
                  </HistoryCell>
                  <PostText>
                    I'm assuming here that <Code>100</Code> is a valid result. If <Code>100</Code> should not be generated, use<br />
                    <Code>random.randrange(0, 100, 5)</Code> or <Code>random.randint(0, 19) * 5</Code>.
                  </PostText>
                </Post>
                <Aside>
                  <AdStrip>
                    <AdBlock $c="#f5b800" $w={30} $m={187} />
                    <AdBlock $c="#e64335" $w={12} $m={70} />
                  </AdStrip>
                  <ReportAd>Report this ad</ReportAd>
                  <AdBox>
                    Give your data<br />the BigQuery
                    <AdChoices>AdChoices<X size={15} strokeWidth={1.5} color="#12b5d6" /></AdChoices>
                  </AdBox>
                </Aside>
              </MainRow>
            </MainArea>
          </Content>
        </Page>
        <PageScroll><PageThumb /></PageScroll>
      </PageWrap>

      <CookiePanel>
        <CookieIcon />
        <CookieText>
          By clicking “Accept all cookies”, you agree Stack Exchange can store cookies on your device and disclose information in accordance with our <CookieLink>Cookie Policy</CookieLink>.
        </CookieText>
        <CookieBtns>
          <CookieBtn>Accept all cookies</CookieBtn>
          <CookieBtn>Necessary cookies only</CookieBtn>
          <CookieBtn $outline>Customize settings</CookieBtn>
        </CookieBtns>
      </CookiePanel>

      <GoogleCard>
        <GoogleHead>
          <GoogleG />
          <span>Sign in with Google</span>
          <GoogleClose><X size={22} strokeWidth={1.6} /></GoogleClose>
        </GoogleHead>
        <GoogleBlue />
      </GoogleCard>

      <ThonnyWin>
        <ThonnyTitle>
          {"Thonny - /home/dylee60/public_html/fractals.py  @  14 : 1"}
          <ThonnyBtns>
            <Minus size={12} strokeWidth={1.3} />
            <Square size={10} strokeWidth={1.2} />
            <RoundClose $bg="#a6a6a6"><X size={12} strokeWidth={2} /></RoundClose>
          </ThonnyBtns>
        </ThonnyTitle>
        <ThonnyMenu />
        <ThonnyBody>
          <ThonnyLeft>
            <Pane $h={410}>
              <EditorText>
                <EditorLine><Num>10</Num>{", "}<Num>2</Num>{"))"}</EditorLine>
                <EditorLine $paren>)</EditorLine>
                <EditorLine $paren>)</EditorLine>
                <EditorLine $paren>)</EditorLine>
                <EditorLine $paren>)</EditorLine>
              </EditorText>
              <ScrollBar thumb={31} />
            </Pane>
            <Pane $h={72} $mt={34}>
              <EditorText />
              <ScrollBar thumb={27} />
            </Pane>
          </ThonnyLeft>
          <ThonnyRight>
            <Tab>Assistant<TabX>×</TabX></Tab>
            <Pane $h={516}>
              <AssistantBody>
                <AsstP>The code in <AsstLink>fractals.py</AsstLink> looks good.</AsstP>
                <AsstP $italic>If it is not working as it should, then consider using some general <AsstPlain>debugging techniques</AsstPlain>.</AsstP>
                <AsstP $italic $right><AsstLink>Was it helpful or confusing?</AsstLink></AsstP>
              </AssistantBody>
              <ScrollBar />
            </Pane>
          </ThonnyRight>
          <Status>Python 3.10.12</Status>
        </ThonnyBody>
      </ThonnyWin>

      <TurtleWin>
        <TurtleTitle>
          Python Turtle Graphics
          <TurtleBtns>
            <Minus size={12} strokeWidth={1.3} />
            <Square size={10} strokeWidth={1.6} />
            <RoundClose $bg="#1e9de0"><X size={12} strokeWidth={2} /></RoundClose>
          </TurtleBtns>
        </TurtleTitle>
        <TurtleCanvas>
          <TurtleSvg width="953" height="803" viewBox="485 166 953 803">
            {segs.map(([a, b, c, d, w]) => (
              <line key={`${a}-${b}`} x1={a} y1={b} x2={c} y2={d} stroke="#000" strokeWidth={w} strokeLinecap="round" />
            ))}
            <path d="M1404 856l11 4-11 4 2-4z" fill="#000" />
          </TurtleSvg>
        </TurtleCanvas>
      </TurtleWin>

      <Taskbar>
        <MintBtn><MintLogo /></MintBtn>
        <TaskSep />
        <Launcher>
          <LaunchItem $open><FirefoxIcon /></LaunchItem>
          <LaunchItem><FolderIcon /></LaunchItem>
          <LaunchItem><TerminalIcon /></LaunchItem>
          <LaunchItem $open><ThonnyIcon>Th</ThonnyIcon></LaunchItem>
          <LaunchItem $open $focus><SettingsIcon><FaCog size={16} /></SettingsIcon></LaunchItem>
        </Launcher>
        <Tray>
          <TrayIcon><TrayBt /></TrayIcon>
          <TrayIcon><TrayClip /></TrayIcon>
          <TrayIcon><TrayShield /></TrayIcon>
          <TrayIcon><TrayNet /></TrayIcon>
          <TrayIcon><TrayVol /></TrayIcon>
          <TrayIcon><Sun /></TrayIcon>
          <Clock>15:22</Clock>
          <ShowDesktop />
        </Tray>
      </Taskbar>
    </Desktop>
  );
}
